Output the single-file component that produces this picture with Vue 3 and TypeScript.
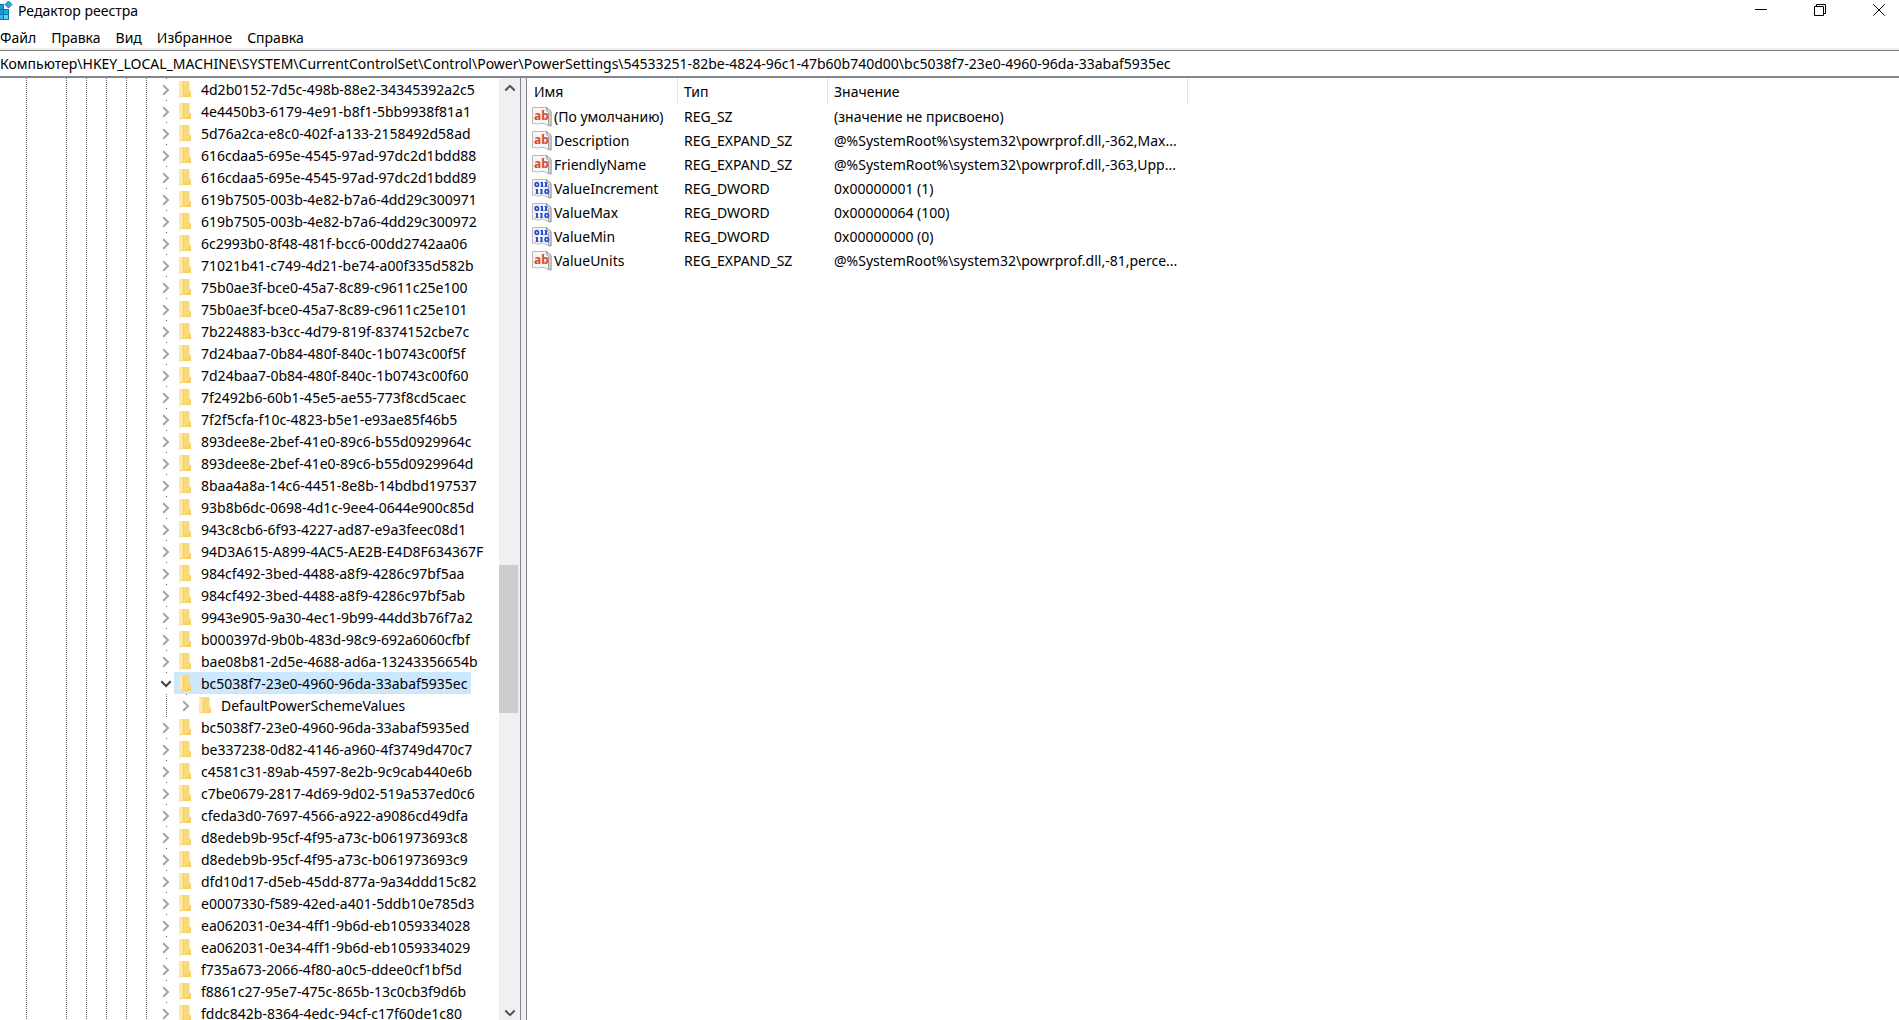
<script setup lang="ts">
import { ref } from 'vue'

interface RegistryValue {
  kind: 'string' | 'binary'
  name: string
  type: string
  data: string
}

interface KeyRow {
  name: string
  child?: boolean
}

const menus = ['Файл', 'Правка', 'Вид', 'Избранное', 'Справка']

const address = ref(
  'Компьютер\\HKEY_LOCAL_MACHINE\\SYSTEM\\CurrentControlSet\\Control\\Power\\PowerSettings\\54533251-82be-4824-96c1-47b60b740d00\\bc5038f7-23e0-4960-96da-33abaf5935ec',
)

const selected = ref('bc5038f7-23e0-4960-96da-33abaf5935ec')

const keys: KeyRow[] = [
  { name: '4d2b0152-7d5c-498b-88e2-34345392a2c5' },
  { name: '4e4450b3-6179-4e91-b8f1-5bb9938f81a1' },
  { name: '5d76a2ca-e8c0-402f-a133-2158492d58ad' },
  { name: '616cdaa5-695e-4545-97ad-97dc2d1bdd88' },
  { name: '616cdaa5-695e-4545-97ad-97dc2d1bdd89' },
  { name: '619b7505-003b-4e82-b7a6-4dd29c300971' },
  { name: '619b7505-003b-4e82-b7a6-4dd29c300972' },
  { name: '6c2993b0-8f48-481f-bcc6-00dd2742aa06' },
  { name: '71021b41-c749-4d21-be74-a00f335d582b' },
  { name: '75b0ae3f-bce0-45a7-8c89-c9611c25e100' },
  { name: '75b0ae3f-bce0-45a7-8c89-c9611c25e101' },
  { name: '7b224883-b3cc-4d79-819f-8374152cbe7c' },
  { name: '7d24baa7-0b84-480f-840c-1b0743c00f5f' },
  { name: '7d24baa7-0b84-480f-840c-1b0743c00f60' },
  { name: '7f2492b6-60b1-45e5-ae55-773f8cd5caec' },
  { name: '7f2f5cfa-f10c-4823-b5e1-e93ae85f46b5' },
  { name: '893dee8e-2bef-41e0-89c6-b55d0929964c' },
  { name: '893dee8e-2bef-41e0-89c6-b55d0929964d' },
  { name: '8baa4a8a-14c6-4451-8e8b-14bdbd197537' },
  { name: '93b8b6dc-0698-4d1c-9ee4-0644e900c85d' },
  { name: '943c8cb6-6f93-4227-ad87-e9a3feec08d1' },
  { name: '94D3A615-A899-4AC5-AE2B-E4D8F634367F' },
  { name: '984cf492-3bed-4488-a8f9-4286c97bf5aa' },
  { name: '984cf492-3bed-4488-a8f9-4286c97bf5ab' },
  { name: '9943e905-9a30-4ec1-9b99-44dd3b76f7a2' },
  { name: 'b000397d-9b0b-483d-98c9-692a6060cfbf' },
  { name: 'bae08b81-2d5e-4688-ad6a-13243356654b' },
  { name: 'bc5038f7-23e0-4960-96da-33abaf5935ec' },
  { name: 'DefaultPowerSchemeValues', child: true },
  { name: 'bc5038f7-23e0-4960-96da-33abaf5935ed' },
  { name: 'be337238-0d82-4146-a960-4f3749d470c7' },
  { name: 'c4581c31-89ab-4597-8e2b-9c9cab440e6b' },
  { name: 'c7be0679-2817-4d69-9d02-519a537ed0c6' },
  { name: 'cfeda3d0-7697-4566-a922-a9086cd49dfa' },
  { name: 'd8edeb9b-95cf-4f95-a73c-b061973693c8' },
  { name: 'd8edeb9b-95cf-4f95-a73c-b061973693c9' },
  { name: 'dfd10d17-d5eb-45dd-877a-9a34ddd15c82' },
  { name: 'e0007330-f589-42ed-a401-5ddb10e785d3' },
  { name: 'ea062031-0e34-4ff1-9b6d-eb1059334028' },
  { name: 'ea062031-0e34-4ff1-9b6d-eb1059334029' },
  { name: 'f735a673-2066-4f80-a0c5-ddee0cf1bf5d' },
  { name: 'f8861c27-95e7-475c-865b-13c0cb3f9d6b' },
  { name: 'fddc842b-8364-4edc-94cf-c17f60de1c80' },
]

const values: RegistryValue[] = [
  { kind: 'string', name: '(По умолчанию)', type: 'REG_SZ', data: '(значение не присвоено)' },
  { kind: 'string', name: 'Description', type: 'REG_EXPAND_SZ', data: '@%SystemRoot%\\system32\\powrprof.dll,-362,Max...' },
  { kind: 'string', name: 'FriendlyName', type: 'REG_EXPAND_SZ', data: '@%SystemRoot%\\system32\\powrprof.dll,-363,Upp...' },
  { kind: 'binary', name: 'ValueIncrement', type: 'REG_DWORD', data: '0x00000001 (1)' },
  { kind: 'binary', name: 'ValueMax', type: 'REG_DWORD', data: '0x00000064 (100)' },
  { kind: 'binary', name: 'ValueMin', type: 'REG_DWORD', data: '0x00000000 (0)' },
  { kind: 'string', name: 'ValueUnits', type: 'REG_EXPAND_SZ', data: '@%SystemRoot%\\system32\\powrprof.dll,-81,perce...' },
]
</script>

<template>
  <div class="window">
    <header class="titlebar">
      <svg class="app-icon" width="13" height="20" viewBox="0 0 13 20" aria-hidden="true">
        <path d="M0 4h4v5h5v11H0z" fill="#0b76ab" />
        <path d="M0 5h3v4H0z" fill="#1f9fd4" />
        <path d="M0 10h3v4H0z" fill="#1b9ad2" />
        <path d="M4 10h4v4H4z" fill="#22a9e0" />
        <path d="M0 15h3v4H0z" fill="#35b5e5" />
        <path d="M4 15h4v4H4z" fill="#63cdf2" />
        <path d="M8.500 1l3.500 3.500L8.500 8L5 4.500z" fill="#2fa9dc" stroke="#0f7db3" />
      </svg>
      <h1 class="title">Редактор реестра</h1>
      <div class="window-controls">
        <button type="button" aria-label="Свернуть">
          <svg width="12" height="12" viewBox="0 0 12 12"><path d="M0 5.500h12" stroke="#000" /></svg>
        </button>
        <button type="button" aria-label="Свернуть в окно">
          <svg width="12" height="12" viewBox="0 0 12 12" fill="none" stroke="#000">
            <path d="M.5 2.500h9v9h-9zM2.500 2.500v-2h9v9h-2" />
          </svg>
        </button>
        <button type="button" aria-label="Закрыть">
          <svg width="12" height="12" viewBox="0 0 12 12" fill="none" stroke="#000">
            <path d="M.3.3l11.400 11.400M11.700.3L.3 11.700" />
          </svg>
        </button>
      </div>
    </header>

    <nav class="menubar">
      <button v-for="item in menus" :key="item" type="button">{{ item }}</button>
    </nav>

    <input v-model="address" class="address" type="text" aria-label="Адрес" spellcheck="false" />

    <main class="content">
      <section class="tree-pane" aria-label="Разделы">
        <div class="guides" aria-hidden="true">
          <span class="guide first"></span>
          <span class="guide wide"></span>
          <span v-for="n in 4" :key="n" class="guide"></span>
        </div>
        <ul class="tree">
          <li
            v-for="key in keys"
            :key="key.name"
            class="row"
            :class="{ selected: key.name === selected }"
          >
            <span v-if="key.child" class="guide" aria-hidden="true"></span>
            <button class="twisty" type="button" aria-label="Развернуть">
              <svg v-if="key.name === selected" width="12" height="8" viewBox="0 0 12 8" fill="none" stroke="#404040" stroke-width="2">
                <path d="M1.300 1.200L6 6l4.700-4.800" />
              </svg>
              <svg v-else width="8" height="12" viewBox="0 0 8 12" fill="none" stroke="#a6a6a6" stroke-width="2">
                <path d="M1.200 1.300L6 6l-4.800 4.700" />
              </svg>
            </button>
            <button class="key" type="button" @click="selected = key.name">
              <svg width="12" height="18" viewBox="0 0 12 18" aria-hidden="true">
                <path d="M2 0h8.500v9.500L12 11v5H2z" fill="#f9d978" />
                <path d="M10.500 9.500L12 11v5H4l6.500-3z" fill="#f5cf69" />
                <path d="M0 0h2.500L4 2v12.500l-2 1V18l-2-2z" fill="#ffe8a3" />
                <path d="M4.300 2v12.700l-2 .8" fill="none" stroke="#edc966" stroke-width=".7" />
              </svg>
              <span>{{ key.name }}</span>
            </button>
          </li>
        </ul>
        <div class="scrollbar">
          <button class="up" type="button" aria-label="Вверх">
            <svg width="12" height="8" viewBox="0 0 12 8" fill="none" stroke="#505050" stroke-width="2"><path d="M1.300 6.500L6 1.800l4.700 4.700" /></svg>
          </button>
          <div class="track">
            <span class="before"></span>
            <span class="thumb"></span>
            <span class="after"></span>
          </div>
          <button class="down" type="button" aria-label="Вниз">
            <svg width="12" height="8" viewBox="0 0 12 8" fill="none" stroke="#505050" stroke-width="2"><path d="M1.300 1.500L6 6.200l4.700-4.700" /></svg>
          </button>
        </div>
      </section>

      <div class="splitter"></div>

      <section class="values-pane" aria-label="Параметры">
        <table class="values">
          <colgroup>
            <col class="col-name" />
            <col class="col-type" />
            <col class="col-data" />
          </colgroup>
          <thead>
            <tr>
              <th scope="col">Имя</th>
              <th scope="col">Тип</th>
              <th scope="col">Значение</th>
            </tr>
          </thead>
          <tbody>
            <tr v-for="value in values" :key="value.name">
              <td>
                <div class="value-name">
                  <svg width="20" height="20" viewBox="0 0 20 20" aria-hidden="true">
                    <path d="M.5.5h14l4.500 4v14.500c-3 .3-4-1.500-7-2.500s-4 .5-6 .5-3-1-5.500-.5z" fill="#f6f6f6" stroke="#b9b9b9" />
                    <path d="M14.500.5v3l2 2v12.500l2.500 1V4.500z" fill="#d8d8d8" stroke="#9c9c9c" />
                    <text v-if="value.kind === 'string'" class="ab" x="2" y="13">ab</text>
                    <g v-else fill="none" stroke="#2a4fd6">
                      <ellipse cx="4.800" cy="5.500" rx="1.700" ry="1.800" stroke-width="1.800" />
                      <ellipse cx="14.800" cy="12.500" rx="1.700" ry="1.800" stroke-width="1.800" />
                      <path d="M10 3v5M14 3v5M5 10v5M9.500 10v5" stroke-width="2" />
                      <path d="M8.500 3.500h2M12.500 3.500h2M8.500 7.500h3M12.500 7.500h3M3.500 10.500h2M8 10.500h2M3.500 14.500h3M8 14.500h3" />
                    </g>
                  </svg>
                  <span>{{ value.name }}</span>
                </div>
              </td>
              <td>{{ value.type }}</td>
              <td>{{ value.data }}</td>
            </tr>
          </tbody>
        </table>
      </section>
    </main>
  </div>
</template>

<style>
body {
  margin: 0;
  overflow: hidden;
}
</style>

<style scoped>
.window {
  display: flex;
  flex-direction: column;
  height: 100vh;
  overflow: hidden;
  background: #fff;
  color: #000;
  font: 14px/20px 'Noto Sans', 'Open Sans', sans-serif;
}

button {
  margin: 0;
  padding: 0;
  border: 0;
  background: none;
  color: inherit;
  font: inherit;
}

svg {
  display: block;
  flex: none;
}

.titlebar {
  display: flex;
  align-items: flex-start;
  height: 26px;
  flex: none;
}

.title {
  flex: 1;
  margin: 0 0 0 5px;
  font-size: 14px;
  line-height: 22px;
  font-weight: 400;
}

.window-controls {
  display: flex;
  gap: 47px;
  padding: 4px 14px 0 0;
}

.menubar {
  display: flex;
  gap: 15px;
  height: 22px;
  flex: none;
  border-bottom: 2px solid #f0f0f0;
}

.menubar button {
  height: 24px;
}

.address {
  box-sizing: border-box;
  width: 100%;
  height: 28px;
  flex: none;
  margin: 0;
  padding: 0;
  border: solid #7a7a7a;
  border-width: 1px 0 2px;
  border-bottom-color: #828790;
  border-radius: 0;
  outline: 0;
  background: #fff;
  color: inherit;
  font: inherit;
}

.content {
  display: flex;
  flex: 1;
  min-height: 0;
}

.tree-pane {
  display: flex;
  width: 520px;
  flex: none;
  border-right: 1px solid #828790;
  overflow: hidden;
}

.guides {
  display: flex;
}

.guide {
  box-sizing: border-box;
  width: 20px;
  flex: none;
  background: repeating-linear-gradient(#666 0 1px, transparent 1px 2px) right / 1px 100% no-repeat;
}

.guide.first {
  width: 27px;
}

.guide.wide {
  width: 40px;
}

.tree {
  flex: 1;
  min-width: 0;
  margin: 0;
  padding: 0;
  list-style: none;
}

.row {
  display: flex;
  height: 22px;
  white-space: nowrap;
}

.twisty {
  display: flex;
  align-items: center;
  justify-content: center;
  width: 27px;
  padding: 2px 0 0 11px;
  background: linear-gradient(#666, #666) 19px 0 / 1px 1px no-repeat;
}

.key {
  display: flex;
  align-items: center;
  gap: 10px;
  padding: 2px 4px 0 5px;
}

.selected .key {
  background: #cce8ff;
}

.scrollbar {
  display: flex;
  flex-direction: column;
  width: 21px;
  flex: none;
  background: #f0f0f0;
}

.scrollbar button {
  display: flex;
  align-items: center;
  justify-content: center;
  flex: none;
}

.scrollbar .up {
  height: 20px;
}

.scrollbar .down {
  height: 14px;
}

.track {
  display: flex;
  flex-direction: column;
  flex: 1;
}

.before {
  flex: 467;
}

.thumb {
  flex: 148;
  margin-right: 2px;
  background: #cdcdcd;
}

.after {
  flex: 293;
}

.splitter {
  width: 5px;
  flex: none;
  border-right: 1px solid #828790;
  background: #f0f0f0;
}

.values-pane {
  flex: 1;
  min-width: 0;
}

.values {
  table-layout: fixed;
  width: 661px;
  border-collapse: separate;
  border-spacing: 0;
  white-space: nowrap;
}

.col-name {
  width: 151px;
}

.col-type {
  width: 150px;
}

.col-data {
  width: 360px;
}

th {
  height: 27px;
  padding: 0 0 0 6px;
  border-right: 1px solid #e5e5e5;
  font-weight: 400;
  text-align: left;
}

td {
  height: 24px;
  padding: 0 0 0 6px;
}

th:first-child {
  padding-left: 7px;
}

td:first-child {
  padding-left: 5px;
}

.value-name {
  display: flex;
  align-items: center;
  gap: 2px;
}

.ab {
  fill: #d9482b;
  font: bold 12px 'Open Sans', sans-serif;
}
</style>
